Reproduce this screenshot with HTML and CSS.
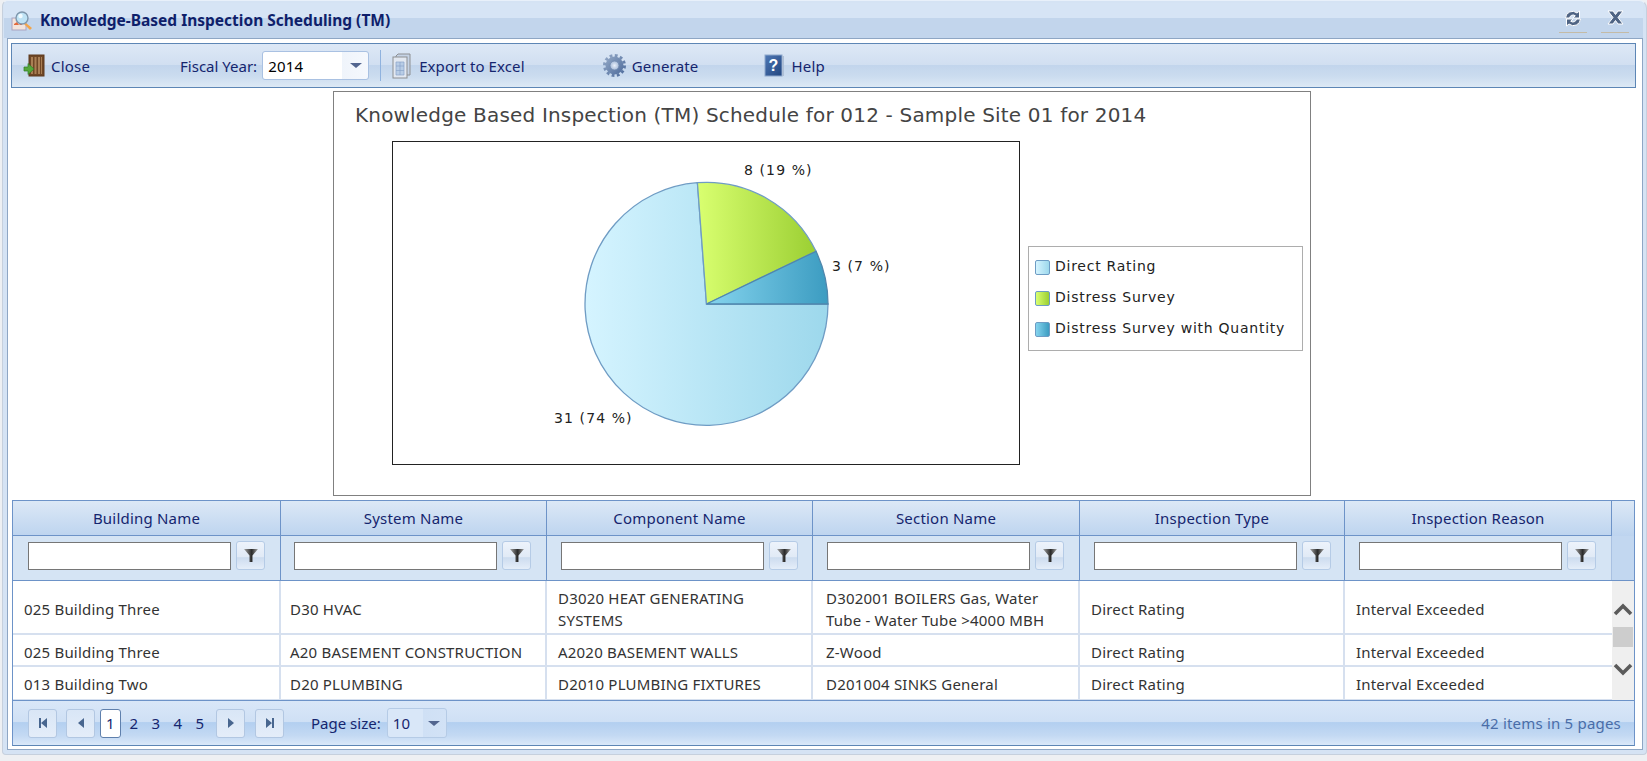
FILE: index.html
```html
<!DOCTYPE html>
<html lang="en">
<head>
<meta charset="utf-8">
<title>Knowledge-Based Inspection Scheduling (TM)</title>
<link rel="stylesheet" href="styles.css">
</head>
<body>
<div class="window">
  <header class="titlebar">
    <svg class="title-icon" width="22" height="22" viewBox="0 0 22 22">
      <rect x="1" y="8" width="14" height="12" fill="#f3e4dc" stroke="#a9a4c0"/>
      <path d="M3 14l3-2 2 3 3-3v3H3z" fill="#e2693c"/>
      <path d="M13 14l6 6 2-2-6-5z" fill="#f2a54a"/>
      <circle cx="11" cy="8" r="6" fill="#bfe3f5" stroke="#7f97ac" stroke-width="1.4"/>
      <circle cx="9.5" cy="6" r="2.2" fill="#f2fbff"/>
    </svg>
    <h1 class="title-text">Knowledge-Based Inspection Scheduling (TM)</h1>
    <div class="title-actions">
      <span class="title-btn">
        <svg width="18" height="17" viewBox="0 0 18 17">
          <path d="M1.500 8a7 7 0 0 1 11.500-5l2.500-2v7H9l2.300-2.200A3.600 3.600 0 0 0 5.500 8z" fill="#4f6484" stroke="#fff" stroke-width="1"/>
          <path d="M16.500 9a7 7 0 0 1-11.500 5l-2.500 2V9H9l-2.300 2.200A3.600 3.600 0 0 0 12.500 9z" fill="#4f6484" stroke="#fff" stroke-width="1"/>
        </svg>
      </span>
      <span class="title-btn">
        <svg width="17" height="15" viewBox="0 0 17 15">
          <path d="M1 1h5l2.500 3.500L11 1h5l-5 6.500 5 6.500h-5l-2.500-3.500L6 14H1l5-6.500z" fill="#4f6484" stroke="#fff" stroke-width="1"/>
        </svg>
      </span>
    </div>
  </header>

  <main class="panel">
    <nav class="toolbar">
      <button class="tool tool-close">
        <svg width="23" height="24" viewBox="0 0 23 24">
          <rect x="6" y="1" width="15" height="21" fill="#6f4726" stroke="#5e3a1e"/>
          <path d="M8 3h2v17H8zm3.500 0h2v17h-2zm3.500 0h2v17h-2zm3 0h1v17h-1z" fill="#a97f55"/>
          <path d="M1 13h4v-3.500l6 5.500-6 5.500V17H1z" fill="#55a83c" stroke="#2f7d24" stroke-width=".7"/>
        </svg>
        <span>Close</span>
      </button>
      <label class="fiscal">Fiscal Year:</label>
      <div class="combo combo-year"><span class="combo-value">2014</span><span class="combo-arrow"></span></div>
      <span class="sep"></span>
      <button class="tool tool-export">
        <svg width="19" height="26" viewBox="0 0 19 26">
          <path d="M6 1h12v21H4V3z" fill="#c5d3e6" stroke="#8d8f92"/>
          <rect x="1" y="4" width="14" height="21" fill="#e2e8f1" stroke="#8d8f92"/>
          <path d="M4 9h8v13H4zM4 13h8M4 17.500h8M8 9v13" fill="#b8cde6" stroke="#8aa5c8" stroke-width=".7"/>
        </svg>
        <span>Export to Excel</span>
      </button>
      <button class="tool tool-generate">
        <svg width="23" height="23" viewBox="0 0 23 23">
          <defs>
            <linearGradient id="gear" x1="0" x2="1" y1="0" y2="1"><stop offset="0" stop-color="#93a8c6"/><stop offset="1" stop-color="#4e6c9c"/></linearGradient>
            <radialGradient id="hub"><stop offset="0" stop-color="#e9f0fa"/><stop offset="1" stop-color="#a7bbd8"/></radialGradient>
          </defs>
          <circle cx="11.500" cy="11.500" r="9" fill="url(#gear)"/>
          <circle cx="11.500" cy="11.500" r="10" fill="none" stroke="url(#gear)" stroke-width="3" stroke-dasharray="2.800 2.436"/>
          <circle cx="11.500" cy="11.500" r="4.500" fill="url(#hub)" stroke="#6f88ad" stroke-width=".8"/>
        </svg>
        <span>Generate</span>
      </button>
      <button class="tool tool-help">
        <svg width="21" height="23" viewBox="0 0 21 23">
          <defs><linearGradient id="book" x1="0" x2="1" y1="0" y2="1"><stop offset="0" stop-color="#4f78b5"/><stop offset="1" stop-color="#21457f"/></linearGradient></defs>
          <rect x="1" y="1" width="17" height="21" fill="url(#book)" stroke="#8ea8cc"/>
          <path d="M18 2h2v20h-2z" fill="#aebfd6"/>
          <text class="help-mark" x="9.500" y="17">?</text>
        </svg>
        <span>Help</span>
      </button>
    </nav>

    <section class="chart-area">
      <div class="chart">
        <div class="chart-title">Knowledge Based Inspection (TM) Schedule for 012 - Sample Site 01 for 2014</div>
        <div class="chart-body">
          <div class="plot">
            <svg class="pie" width="626" height="322" viewBox="0 0 626 322">
              <defs>
                <linearGradient id="g-blue" x1="0" x2="1" y1="0" y2="0"><stop offset="0" stop-color="#d5f4ff"/><stop offset="1" stop-color="#9dd8ec"/></linearGradient>
                <linearGradient id="g-green" x1="0" x2="1" y1="0" y2="0"><stop offset="0" stop-color="#d9ff70"/><stop offset="1" stop-color="#9bcf33"/></linearGradient>
                <linearGradient id="g-teal" x1="0" x2="1" y1="0" y2="0"><stop offset="0" stop-color="#85d4ee"/><stop offset="1" stop-color="#3c9cc1"/></linearGradient>
              </defs>
              <path d="M313.500 162L304.400 40.700A121.500 121.500 0 1 0 435 162Z" fill="url(#g-blue)" stroke="#6f9cc4" stroke-width="1.300"/>
              <path d="M313.500 162L423 109.300A121.500 121.500 0 0 0 304.400 40.700Z" fill="url(#g-green)" stroke="#6f9cc4" stroke-width="1.300"/>
              <path d="M313.500 162H435A121.500 121.500 0 0 0 423 109.300Z" fill="url(#g-teal)" stroke="#4f87ad" stroke-width="1.300"/>
              <text class="pie-label" x="351" y="33">8 (19 %)</text>
              <text class="pie-label" x="439" y="129">3 (7 %)</text>
              <text class="pie-label" x="161" y="281">31 (74 %)</text>
            </svg>
          </div>
          <ul class="legend">
            <li class="legend-item"><i class="swatch swatch-blue"></i>Direct Rating</li>
            <li class="legend-item"><i class="swatch swatch-green"></i>Distress Survey</li>
            <li class="legend-item"><i class="swatch swatch-teal"></i>Distress Survey with Quantity</li>
          </ul>
        </div>
      </div>
    </section>

    <section class="grid">
      <div class="grid-row grid-head">
        <div class="th">Building Name</div>
        <div class="th">System Name</div>
        <div class="th">Component Name</div>
        <div class="th">Section Name</div>
        <div class="th">Inspection Type</div>
        <div class="th">Inspection Reason</div>
        <div class="th th-end"></div>
      </div>
      <div class="grid-row grid-filter">
        <div class="tf"><input class="filter-input" type="text"><button class="filter-btn"><svg width="16" height="15" viewBox="0 0 16 15"><defs><linearGradient id="fn" x1="0" x2="1" y1="0" y2="0"><stop offset="0" stop-color="#a5a5a5"/><stop offset=".55" stop-color="#2a2a2a"/><stop offset="1" stop-color="#a5a5a5"/></linearGradient></defs><path d="M1 1h14L9.500 7.500V14h-3V7.500z" fill="url(#fn)"/></svg></button></div>
        <div class="tf"><input class="filter-input" type="text"><button class="filter-btn"><svg width="16" height="15" viewBox="0 0 16 15"><path d="M1 1h14L9.500 7.500V14h-3V7.500z" fill="url(#fn)"/></svg></button></div>
        <div class="tf"><input class="filter-input" type="text"><button class="filter-btn"><svg width="16" height="15" viewBox="0 0 16 15"><path d="M1 1h14L9.500 7.500V14h-3V7.500z" fill="url(#fn)"/></svg></button></div>
        <div class="tf"><input class="filter-input" type="text"><button class="filter-btn"><svg width="16" height="15" viewBox="0 0 16 15"><path d="M1 1h14L9.500 7.500V14h-3V7.500z" fill="url(#fn)"/></svg></button></div>
        <div class="tf"><input class="filter-input" type="text"><button class="filter-btn"><svg width="16" height="15" viewBox="0 0 16 15"><path d="M1 1h14L9.500 7.500V14h-3V7.500z" fill="url(#fn)"/></svg></button></div>
        <div class="tf"><input class="filter-input" type="text"><button class="filter-btn"><svg width="16" height="15" viewBox="0 0 16 15"><path d="M1 1h14L9.500 7.500V14h-3V7.500z" fill="url(#fn)"/></svg></button></div>
        <div class="tf tf-end"></div>
      </div>
      <div class="grid-body">
        <div class="rows">
          <div class="grid-row row row-tall">
            <div class="td">025 Building Three</div><div class="td">D30 HVAC</div><div class="td">D3020 HEAT GENERATING SYSTEMS</div><div class="td">D302001 BOILERS Gas, Water Tube - Water Tube &gt;4000 MBH</div><div class="td">Direct Rating</div><div class="td">Interval Exceeded</div>
          </div>
          <div class="grid-row row row-mid">
            <div class="td">025 Building Three</div><div class="td">A20 BASEMENT CONSTRUCTION</div><div class="td">A2020 BASEMENT WALLS</div><div class="td">Z-Wood</div><div class="td">Direct Rating</div><div class="td">Interval Exceeded</div>
          </div>
          <div class="grid-row row row-last">
            <div class="td">013 Building Two</div><div class="td">D20 PLUMBING</div><div class="td">D2010 PLUMBING FIXTURES</div><div class="td">D201004 SINKS General</div><div class="td">Direct Rating</div><div class="td">Interval Exceeded</div>
          </div>
        </div>
        <div class="scrollbar">
          <svg width="20" height="14" viewBox="0 0 20 14"><path d="M2 12l8-8 8 8" fill="none" stroke="#5b5b5b" stroke-width="3.600"/></svg>
          <span class="thumb"></span>
          <svg width="20" height="14" viewBox="0 0 20 14"><path d="M2 2l8 8 8-8" fill="none" stroke="#5b5b5b" stroke-width="3.600"/></svg>
        </div>
      </div>
      <footer class="pager">
        <button class="pg-btn"><svg width="10" height="12" viewBox="0 0 10 12"><path d="M1 1h2v10H1zM9 1v10L3 6z" fill="#48668f"/></svg></button>
        <button class="pg-btn pg-prev"><svg width="8" height="12" viewBox="0 0 8 12"><path d="M7 1v10L1 6z" fill="#48668f"/></svg></button>
        <span class="pg-num pg-current">1</span>
        <span class="pg-num">2</span>
        <span class="pg-num">3</span>
        <span class="pg-num">4</span>
        <span class="pg-num">5</span>
        <button class="pg-btn pg-next"><svg width="8" height="12" viewBox="0 0 8 12"><path d="M1 1v10l6-5z" fill="#48668f"/></svg></button>
        <button class="pg-btn pg-last"><svg width="10" height="12" viewBox="0 0 10 12"><path d="M1 1v10l6-5zM7 1h2v10H7z" fill="#48668f"/></svg></button>
        <span class="pg-size-label">Page size:</span>
        <div class="combo combo-size"><span class="combo-value">10</span><span class="combo-arrow"></span></div>
        <span class="pg-info">42 items in 5 pages</span>
      </footer>
    </section>
  </main>
</div>
</body>
</html>
```

FILE: styles.css
```css
* { box-sizing: border-box; }
html, body { margin: 0; padding: 0; height: 100%; }
body {
  background: #eef0f3;
  overflow: hidden;
  font-family: "Noto Sans", "Open Sans", sans-serif;
  font-size: 15px;
  letter-spacing: .2px;
  color: #15256e;
}
button { font: inherit; letter-spacing: inherit; color: inherit; background: none; border: 0; padding: 0; margin: 0; }

.window {
  width: 1645px;
  height: 755px;
  margin-left: 2px;
  padding: 2px 3px 4px 4px;
  display: flex;
  flex-direction: column;
  background: #d5e3f4;
  border: 1px solid #c6d0dd;
  border-top-color: #e8f0fa;
  border-radius: 6px 8px 4px 4px;
}

.titlebar {
  height: 35px;
  margin: 0 0 0 -3px;
  padding: 0 14px 0 7px;
  display: flex;
  align-items: center;
  flex: none;
  background: linear-gradient(#d6e4f5 0, #d6e4f5 44%, #c2d5ec 44%, #c2d5ec 100%);
}
.title-icon { flex: none; }
.title-text {
  margin: -2px 0 0 7px;
  font-size: 15.500px;
  letter-spacing: 0;
  font-weight: 700;
  color: #0f1f6b;
}
.title-actions { margin-left: auto; display: flex; gap: 14px; }
.title-btn {
  width: 28px;
  height: 25px;
  padding-top: 2px;
  display: flex;
  align-items: flex-start;
  justify-content: center;
  border-bottom: 1px solid #c4bba6;
}

.panel {
  flex: 1;
  min-height: 0;
  padding: 4px 6px 4px 3px;
  display: flex;
  flex-direction: column;
  background: #fff;
  border: 1px solid #8ea6c4;
}

.toolbar {
  height: 45px;
  flex: none;
  padding-left: 11px;
  display: flex;
  align-items: center;
  border: 1px solid #5d86b5;
  background: linear-gradient(#dde8f6 0, #d1dff1 48%, #c2d5ec 50%, #cbdcef 75%, #dde9f5 100%);
}
.tool { display: flex; align-items: center; color: #15256e; white-space: nowrap; }
.tool-close { gap: 5px; }
.fiscal { margin-left: 90px; margin-right: 5px; white-space: nowrap; letter-spacing: 0; }
.combo {
  display: flex;
  align-items: center;
  border: 1px solid #a9c1e2;
  border-radius: 3px;
  background: linear-gradient(90deg, #fff 0, #fff 75%, #eff4fb 75%, #f5f8fd 100%);
}
.combo-year { width: 107px; height: 29px; padding-left: 5px; color: #000; flex: none; }
.combo-value { flex: 1; }
.combo-arrow {
  width: 0;
  height: 0;
  margin-right: 6px;
  border-left: 6px solid transparent;
  border-right: 6px solid transparent;
  border-top: 5px solid #52658f;
}
.sep { width: 1px; height: 31px; margin-left: 11px; background: #8fb2de; flex: none; }
.tool-export { margin-left: 11px; gap: 8px; letter-spacing: .1px; }
.tool-generate { margin-left: 78px; gap: 6px; }
.tool-help { margin-left: 65px; gap: 7px; }
.help-mark { font: 700 16px "Liberation Sans", sans-serif; fill: #fff; text-anchor: middle; }

.chart-area {
  flex: none;
  height: 412px;
  display: flex;
  align-items: flex-start;
  padding: 3px 0 0 322px;
}
.chart {
  width: 978px;
  height: 405px;
  border: 1px solid #808080;
  background: #fff;
  font-family: "DejaVu Sans", sans-serif;
  letter-spacing: 0;
  color: #222;
}
.chart-title {
  height: 49px;
  padding: 13px 0 0 21px;
  font-size: 20px;
  letter-spacing: .18px;
  line-height: 20px;
  white-space: nowrap;
  color: #444;
}
.chart-body { display: flex; align-items: flex-start; padding-left: 58px; }
.plot { width: 628px; height: 324px; border: 1px solid #222; flex: none; }
.pie { display: block; }
.pie-label { font: 14px "DejaVu Sans", sans-serif; fill: #222; letter-spacing: 1.100px; }

.legend {
  width: 275px;
  height: 105px;
  margin: 105px 0 0 8px;
  padding: 3px 0 0 6px;
  list-style: none;
  border: 1px solid #adadad;
  font-size: 14px;
}
.legend-item {
  height: 31px;
  display: flex;
  align-items: center;
  gap: 5px;
  white-space: nowrap;
  letter-spacing: .75px;
}
.swatch { width: 15px; height: 15px; margin-top: 3px; border: 1px solid #6d9cc4; border-radius: 2px; }
.swatch-blue { background: linear-gradient(90deg, #d5f4ff, #9dd8ec); }
.swatch-green { background: linear-gradient(90deg, #d9ff70, #9bcf33); }
.swatch-teal { background: linear-gradient(90deg, #85d4ee, #3c9cc1); }

.grid {
  width: 1623px;
  flex: none;
  margin-left: 1px;
  border: 1px solid #6d93c8;
  border-bottom-color: #5d86b5;
}
.grid-row {
  display: grid;
  grid-template-columns: 268px 266px 266px 267px 265px 267px;
}
.grid-head, .grid-filter { grid-template-columns: 268px 266px 266px 267px 265px 267px 1fr; }
.grid-head { height: 35px; background: linear-gradient(#dce8f6, #bdd4ef); }
.th {
  display: flex;
  align-items: center;
  justify-content: center;
  border-right: 1px solid #6d93c8;
  border-bottom: 1px solid #6d93c8;
}
.th-end { border-right: 0; border-bottom: 0; border-left: 0; }
.grid-filter { height: 45px; background: #d5e4f4; border-bottom: 1px solid #6d93c8; }
.tf {
  display: flex;
  align-items: center;
  gap: 5px;
  padding: 0 0 5px 14px;
  border-right: 1px solid #6d93c8;
}
.tf:first-child { padding-left: 15px; }
.tf:nth-child(2) { padding-left: 13px; }
.tf-end { background: #c2d7f0; border-right: 0; margin-left: -1px; border-left: 1px solid #a9c1e2; }
.filter-input {
  width: 203px;
  height: 28px;
  border: 1.500px solid #767676;
  background: #fff;
  outline: 0;
  padding: 0;
  margin: 0;
  flex: none;
}
.filter-btn {
  width: 29px;
  height: 29px;
  flex: none;
  display: flex;
  align-items: center;
  justify-content: center;
  border: 1px solid #b5cbe6;
  border-radius: 3px;
  background: linear-gradient(#edf3fb 0, #e1eaf6 55%, #cddcef 58%, #e5eef9 100%);
}

.grid-body { display: flex; height: 120px; overflow: hidden; border-bottom: 1px solid #6d93c8; }
.rows { width: 1599px; flex: none; color: #333; }
.row { border-bottom: 2px solid #d6e0ef; }
.row-tall { height: 54px; }
.row-mid { height: 32px; }
.row-last { height: 34px; }
.td {
  display: flex;
  align-items: center;
  padding: 3px 10px 0 11px;
  line-height: 22px;
  border-right: 2px solid #d6e0ef;
}
.td:nth-child(2) { padding-left: 9px; }
.td:nth-child(4) { padding-left: 13px; }
.td:last-child { border-right: 0; }
.row-last .td { padding-top: 1px; }
.scrollbar {
  flex: 1;
  background: #efefef;
  display: flex;
  flex-direction: column;
  align-items: center;
  padding-top: 21px;
}
.thumb { width: 20px; height: 20px; margin: 11px 0 16px; background: #cdcdcd; flex: none; }

.pager {
  height: 44px;
  padding-left: 15px;
  display: flex;
  align-items: center;
  background: linear-gradient(#d9e7f8 0, #cfe0f5 47%, #b3cff0 49%, #c3d9f3 78%, #dae8f9 100%);
}
.pg-btn {
  width: 29px;
  height: 29px;
  flex: none;
  display: flex;
  align-items: center;
  justify-content: center;
  border: 1px solid #b2c7e2;
  border-radius: 3px;
  background: linear-gradient(#d9e6f6, #e4edf9);
}
.pg-prev { margin-left: 9px; }
.pg-num { width: 22px; text-align: center; color: #15256e; font-size: 15px; }
.pg-current {
  width: 21px;
  height: 29px;
  margin: 0 2px 0 5px;
  line-height: 27px;
  background: #fff;
  border: 1px solid #5f80ad;
  border-radius: 3px;
}
.pg-next { margin-left: 5px; }
.pg-last { margin-left: 10px; }
.pg-size-label { margin-left: 27px; white-space: nowrap; letter-spacing: 0; }
.combo-size {
  width: 60px;
  height: 30px;
  margin-left: 6px;
  padding-left: 5px;
  border-color: #b5cbe6;
  background: linear-gradient(90deg, #d9e7f8 0, #d9e7f8 60%, #cfe0f5 60%, #d2e2f6 100%);
}
.pg-info { margin-left: auto; margin-right: 13px; color: #4a6da8; white-space: nowrap; }
```
